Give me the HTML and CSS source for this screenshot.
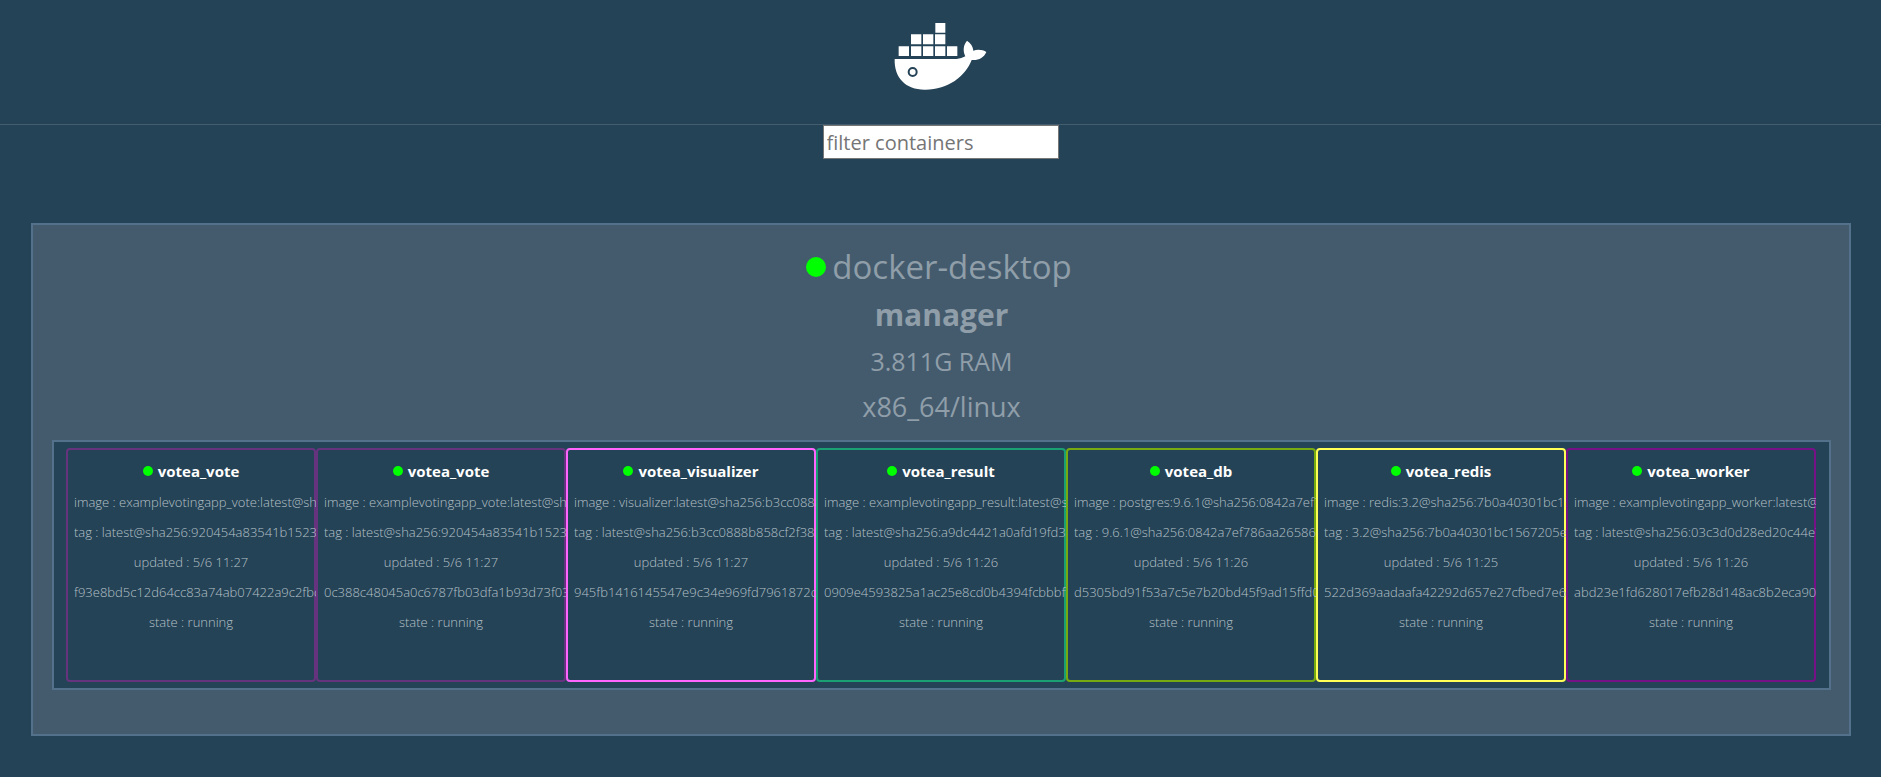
FILE: index.html
```html
<!DOCTYPE html>
<html lang="en">
<head>
<meta charset="utf-8">
<title>Visualizer</title>
<link rel="stylesheet" href="styles.css">
</head>
<body>
<header class="header">
  <svg class="logo" viewBox="44 36 279 204" role="img" aria-label="Docker">
    <path fill="#fff" d="M58 109h31v29H58zM95 109h31v29H95zM131 109h31v29h-31zM167 109h31v29h-31zM203 109h31v29h-31zM95 73h31v30H95zM131 73h31v30h-31zM167 73h31v30h-31zM168 39h30v29h-30z"/>
    <path fill="#fff" d="M46 147H232Q247 146 258 139C250 122 252 105 263 92C274 99 281 109 282 122C296 117 312 120 321 126C314 143 297 152 277 150C258 199 207 239 138 239C80 240 44 204 46 147z"/>
    <circle cx="100" cy="186" r="12" fill="#fff" stroke="#254356" stroke-width="6"/>
  </svg>
</header>
<main>
  <div class="filter-row"><input class="filter" type="text" placeholder="filter containers" aria-label="filter containers"></div>
  <section class="node">
    <h1 class="node-name"><span class="dot dot-large"></span>docker-desktop</h1>
    <p class="node-role">manager</p>
    <p class="node-ram">3.811G RAM</p>
    <p class="node-platform">x86_64/linux</p>
    <div class="tasks">
      <article class="task vote"><h2 class="task-name"><span class="dot"></span>votea_vote</h2>
        <ul class="details"><li>image : examplevotingapp_vote:latest@sha256:920454a83541b15239</li><li>tag : latest@sha256:920454a83541b15239</li><li>updated : 5/6 11:27</li><li>f93e8bd5c12d64cc83a74ab07422a9c2fbc5</li><li>state : running</li></ul></article>
      <article class="task vote"><h2 class="task-name"><span class="dot"></span>votea_vote</h2>
        <ul class="details"><li>image : examplevotingapp_vote:latest@sha256:920454a83541b15239</li><li>tag : latest@sha256:920454a83541b15239</li><li>updated : 5/6 11:27</li><li>0c388c48045a0c6787fb03dfa1b93d73f03c</li><li>state : running</li></ul></article>
      <article class="task visualizer"><h2 class="task-name"><span class="dot"></span>votea_visualizer</h2>
        <ul class="details"><li>image : visualizer:latest@sha256:b3cc0888b858cf2f383</li><li>tag : latest@sha256:b3cc0888b858cf2f383</li><li>updated : 5/6 11:27</li><li>945fb1416145547e9c34e969fd7961872de</li><li>state : running</li></ul></article>
      <article class="task result"><h2 class="task-name"><span class="dot"></span>votea_result</h2>
        <ul class="details"><li>image : examplevotingapp_result:latest@sha256:a9dc4421a0afd19fd32</li><li>tag : latest@sha256:a9dc4421a0afd19fd32</li><li>updated : 5/6 11:26</li><li>0909e4593825a1ac25e8cd0b4394fcbbbffc</li><li>state : running</li></ul></article>
      <article class="task db"><h2 class="task-name"><span class="dot"></span>votea_db</h2>
        <ul class="details"><li>image : postgres:9.6.1@sha256:0842a7ef786aa265862</li><li>tag : 9.6.1@sha256:0842a7ef786aa265862</li><li>updated : 5/6 11:26</li><li>d5305bd91f53a7c5e7b20bd45f9ad15ffd0c</li><li>state : running</li></ul></article>
      <article class="task redis"><h2 class="task-name"><span class="dot"></span>votea_redis</h2>
        <ul class="details"><li>image : redis:3.2@sha256:7b0a40301bc1567205e6</li><li>tag : 3.2@sha256:7b0a40301bc1567205e6</li><li>updated : 5/6 11:25</li><li>522d369aadaafa42292d657e27cfbed7e60</li><li>state : running</li></ul></article>
      <article class="task worker"><h2 class="task-name"><span class="dot"></span>votea_worker</h2>
        <ul class="details"><li>image : examplevotingapp_worker:latest@sha256:03c3d0d28ed20c44e7</li><li>tag : latest@sha256:03c3d0d28ed20c44e7</li><li>updated : 5/6 11:26</li><li>abd23e1fd628017efb28d148ac8b2eca904</li><li>state : running</li></ul></article>
    </div>
  </section>
</main>
</body>
</html>
```
FILE: styles.css
```css
* { box-sizing: border-box; }
body {
  margin: 0;
  background: #254356;
  color: #8f9ea8;
  font-family: "Open Sans", sans-serif;
}
h1, h2, p, ul { margin: 0; padding: 0; }
.header {
  display: flex;
  justify-content: center;
  padding: 22px 0 34px;
  border-bottom: 1px solid #445d6e;
}
.logo { display: block; width: 93px; height: 68px; }
.filter-row { display: flex; justify-content: center; }
.filter {
  width: 236px;
  height: 34px;
  padding: 1px 3px;
  border: 1px solid #767676;
  background: #fff;
  color: #333;
  font: 20px "Open Sans", sans-serif;
}
.filter::placeholder { color: #757575; }
.node {
  margin: 64px 30px 40px 31px;
  padding: 18px 18px 44px 19px;
  border: 2px solid #53718a;
  background: #445b6e;
  text-align: center;
}
.node-name, .node-role, .node-ram, .node-platform {
  line-height: 46px;
  font-weight: 400;
}
.node-name {
  display: flex;
  align-items: center;
  justify-content: center;
  gap: 6px;
  margin-bottom: 1px;
  padding-right: 5px;
  font-size: 33px;
  line-height: 48px;
}
.node-role { font-size: 30px; font-weight: 700; }
.node-ram { font-size: 25px; }
.node-platform { font-size: 27px; }
.dot {
  flex: none;
  width: 10px;
  height: 10px;
  border-radius: 50%;
  background: #0f0;
}
.dot-large { width: 20px; height: 20px; }
.tasks {
  display: flex;
  flex-wrap: wrap;
  justify-content: center;
  margin-top: 10px;
  padding: 6px 1px 6px 0;
  border: 2px solid #53718a;
  background: #254356;
}
.task {
  width: 250px;
  padding: 6px 6px 43px;
  border: 2px solid;
  border-radius: 4px;
}
.vote { border-color: #66337f; }
.visualizer { border-color: #ff66ff; }
.result { border-color: #1aa073; }
.db { border-color: #77aa11; }
.redis { border-color: #ffff55; }
.worker { border-color: #771188; }
.task-name {
  display: flex;
  align-items: center;
  justify-content: center;
  gap: 5px;
  margin-bottom: 1px;
  color: #fff;
  font-size: 15px;
  line-height: 30px;
}
.details {
  margin-right: -8px;
  padding-right: 8px;
  overflow: hidden;
  list-style: none;
  color: #b4c0c8;
  font-size: 13px;
  font-weight: 300;
  line-height: 30px;
  white-space: nowrap;
}
```
